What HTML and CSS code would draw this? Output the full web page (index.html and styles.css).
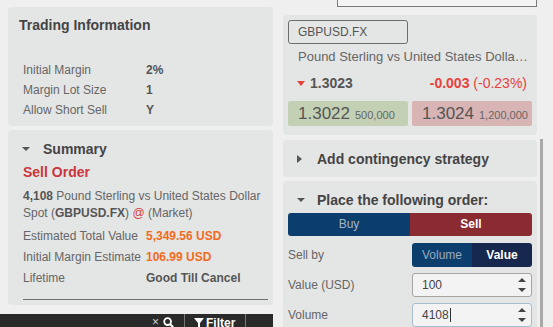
FILE: index.html
```html
<!DOCTYPE html>
<html>
<head>
	<title>Order Ticket</title>
	<link rel="stylesheet" href="styles.css">
</head>
<body>
	<div class="page">
		<div class="left">
			<div class="card info">
				<h2 class="info-title">Trading Information</h2>
				<div class="rows">
					<div class="row"><span class="label">Initial Margin</span><span class="value">2%</span></div>
					<div class="row"><span class="label">Margin Lot Size</span><span class="value">1</span></div>
					<div class="row"><span class="label">Allow Short Sell</span><span class="value">Y</span></div>
				</div>
			</div>
			<div class="card summary">
				<div class="section-head"><span class="caret-down"></span>Summary</div>
				<div class="sell-order">Sell Order</div>
				<p class="desc"><b>4,108</b> Pound Sterling vs United States Dollar Spot (<b>GBPUSD.FX</b>) <span class="at">@</span> (Market)</p>
				<div class="row wide"><span class="label">Estimated Total Value</span><span class="value orange">5,349.56 USD</span></div>
				<div class="row wide"><span class="label">Initial Margin Estimate</span><span class="value orange">106.99 USD</span></div>
				<div class="row wide"><span class="label">Lifetime</span><span class="value">Good Till Cancel</span></div>
				<div class="divider"></div>
			</div>
			<div class="toolbar">
				<span class="clear">×</span>
				<svg class="icon-search" width="11" height="11" viewBox="0 0 11 11">
					<circle cx="4.6" cy="4.6" r="3.4" fill="none" stroke="#fff" stroke-width="1.8"/>
					<line x1="7" y1="7" x2="10.2" y2="10.2" stroke="#fff" stroke-width="2"/>
				</svg>
				<span class="sep"></span>
				<svg class="icon-filter" width="10" height="11" viewBox="0 0 10 11">
					<path d="M0 0H10L6 5V11L4 10V5Z" fill="#fff"/>
				</svg>
				<span class="filter-text">Filter</span>
				<span class="sep"></span>
			</div>
		</div>
		<div class="right">
			<div class="search-box"></div>
			<div class="card quote">
				<div class="symbol">GBPUSD.FX</div>
				<div class="name">Pound Sterling vs United States Dollar Spot</div>
				<div class="change">
					<span class="last"><span class="tri-red"></span>1.3023</span>
					<span class="delta"><b>-0.003</b> (-0.23%)</span>
				</div>
				<div class="prices">
					<div class="px bid"><span class="big">1.3022</span><span class="small">500,000</span></div>
					<div class="px ask"><span class="big">1.3024</span><span class="small">1,200,000</span></div>
				</div>
			</div>
			<div class="scroll">
				<div class="scroll-content">
					<div class="card collapsed"><span class="caret-right"></span>Add contingency strategy</div>
					<div class="card order">
						<div class="order-head"><span class="caret-down"></span>Place the following order:</div>
						<div class="side">
							<span class="buy">Buy</span>
							<span class="sell">Sell</span>
						</div>
						<div class="field">
							<span class="field-label">Sell by</span>
							<div class="toggle">
								<span class="opt">Volume</span>
								<span class="opt active">Value</span>
							</div>
						</div>
						<div class="field">
							<span class="field-label">Value (USD)</span>
							<div class="input">
								<span class="input-text">100</span>
								<span class="spin"><span class="up"></span><span class="down"></span></span>
							</div>
						</div>
						<div class="field">
							<span class="field-label">Volume</span>
							<div class="input focus">
								<span class="input-text">4108<span class="cursor"></span></span>
								<span class="spin"><span class="up"></span><span class="down"></span></span>
							</div>
						</div>
					</div>
				</div>
				<div class="scrollbar"></div>
			</div>
		</div>
	</div>
</body>
</html>
```

FILE: styles.css
```css
body {
	margin: 0;
	background-color: #efefef;
	font-family: "Liberation Sans", Arial, sans-serif;
	color: #555555;
	overflow: hidden;
}
.page {
	display: flex;
	height: 327px;
	overflow: hidden;
}
.left {
	width: 273px;
	display: flex;
	flex-direction: column;
}
.left > * {
	flex-shrink: 0;
}
.card {
	background-color: #e4e5e5;
	border-radius: 4px;
	box-sizing: border-box;
}
.info {
	margin: 7px 0 0 8px;
	height: 119px;
	padding: 10px 5px 0 11px;
}
.info-title {
	margin: 0;
	font-size: 14px;
	line-height: 16px;
	color: #444444;
}
.info .rows {
	margin-top: 27px;
	padding-left: 4px;
}
.row {
	display: flex;
	font-size: 12px;
	line-height: 20px;
}
.row.wide {
	line-height: 21px;
}
.label {
	width: 123px;
	flex-shrink: 0;
	color: #666666;
}
.value {
	font-weight: bold;
	color: #555555;
}
.value.orange {
	color: #f26b1d;
}
.summary {
	margin: 4px 0 0 8px;
	height: 175px;
	padding: 10px 5px 0 15px;
}
.section-head {
	display: flex;
	align-items: center;
	font-size: 14px;
	font-weight: bold;
	line-height: 18px;
	color: #444444;
}
.caret-down {
	width: 0;
	height: 0;
	border-left: 4px solid transparent;
	border-right: 4px solid transparent;
	border-top: 4px solid #555555;
}
.section-head .caret-down {
	margin: 0 13px 0 -1px;
}
.sell-order {
	margin-top: 5px;
	font-size: 14px;
	font-weight: bold;
	line-height: 18px;
	color: #c9373d;
}
.desc {
	margin: 7px 0 4px;
	font-size: 12px;
	line-height: 17px;
	color: #666666;
}
.desc b {
	color: #555555;
}
.at {
	color: #d43d3d;
}
.divider {
	margin-top: 10px;
	border-top: 1px solid #707070;
}
.toolbar {
	margin-top: 9px;
	height: 30px;
	display: flex;
	align-items: flex-start;
	background-color: #2a2a2a;
	color: #ffffff;
	line-height: 16px;
}
.clear {
	margin-left: 152px;
	font-size: 12px;
	color: #d0d0d0;
}
.icon-search {
	margin: 3px 0 0 4px;
}
.sep {
	width: 1px;
	height: 16px;
	background-color: #777777;
	margin-left: 10px;
}
.icon-filter {
	margin: 4px 0 0 9px;
}
.filter-text {
	margin-left: 2px;
	font-size: 12px;
	font-weight: bold;
	padding-top: 1px;
}
.right {
	margin-left: 10px;
	width: 260px;
	display: flex;
	flex-direction: column;
}
.right > * {
	flex-shrink: 0;
}
.search-box {
	margin-left: 54px;
	width: 198px;
	height: 6px;
	border: 1px solid #7a7a7a;
	border-top: none;
	background-color: #f4f4f4;
}
.quote {
	margin-top: 8px;
	width: 254px;
	height: 120px;
	padding: 5px 5px 0 5px;
}
.symbol {
	width: 120px;
	height: 24px;
	box-sizing: border-box;
	border: 1px solid #6d6d6d;
	border-radius: 3px;
	padding-left: 9px;
	font-size: 12px;
	line-height: 22px;
	color: #555555;
}
.name {
	margin-top: 4px;
	padding: 0 4px 0 10px;
	font-size: 13px;
	line-height: 18px;
	color: #666666;
	white-space: nowrap;
	overflow: hidden;
	text-overflow: ellipsis;
}
.change {
	display: flex;
	justify-content: space-between;
	align-items: center;
	margin-top: 8px;
	padding: 0 5px 0 9px;
	line-height: 18px;
	font-size: 14px;
}
.last {
	display: flex;
	align-items: center;
	font-weight: bold;
	color: #555555;
}
.tri-red {
	width: 0;
	height: 0;
	border-left: 4px solid transparent;
	border-right: 4px solid transparent;
	border-top: 5px solid #e8413c;
	margin-right: 5px;
}
.delta {
	color: #e8413c;
}
.prices {
	display: flex;
	gap: 4px;
	margin-top: 9px;
}
.px {
	width: 120px;
	height: 25px;
	box-sizing: border-box;
	padding-left: 10px;
	display: flex;
	align-items: baseline;
	line-height: 25px;
	border-radius: 2px;
}
.bid {
	background-color: #c3d0b4;
}
.ask {
	background-color: #d9b4b4;
}
.big {
	font-size: 17px;
	color: #555555;
}
.small {
	margin-left: 5px;
	font-size: 11px;
	color: #666666;
}
.scroll {
	display: flex;
	margin-top: 4px;
	height: 188px;
}
.scroll-content {
	width: 254px;
}
.scrollbar {
	width: 3px;
	margin-left: 3px;
	background-color: #a9a9a9;
}
.collapsed {
	margin-top: 1px;
	height: 37px;
	display: flex;
	align-items: center;
	padding-left: 14px;
	font-size: 14px;
	font-weight: bold;
	color: #444444;
}
.caret-right {
	width: 0;
	height: 0;
	border-top: 4px solid transparent;
	border-bottom: 4px solid transparent;
	border-left: 5px solid #555555;
	margin-right: 15px;
}
.order {
	margin-top: 4px;
	height: 200px;
	padding: 10px 5px 0 5px;
}
.order-head {
	display: flex;
	align-items: center;
	padding-left: 9px;
	font-size: 14px;
	font-weight: bold;
	line-height: 18px;
	color: #444444;
}
.order-head .caret-down {
	margin-right: 12px;
}
.side {
	display: flex;
	margin-top: 4px;
	height: 23px;
	border-radius: 3px;
	overflow: hidden;
	font-size: 12px;
	line-height: 23px;
	text-align: center;
}
.buy {
	flex: 1;
	background-color: #0c3e6d;
	color: #a7b4c4;
}
.sell {
	flex: 1;
	background-color: #8a2a31;
	color: #ffffff;
	font-weight: bold;
}
.field {
	display: flex;
	align-items: center;
	margin-top: 6px;
}
.side + .field {
	margin-top: 7px;
}
.field-label {
	width: 124px;
	font-size: 12px;
	color: #666666;
}
.toggle {
	display: flex;
	width: 120px;
	height: 24px;
	border-radius: 3px;
	overflow: hidden;
	font-size: 12px;
	line-height: 24px;
	text-align: center;
}
.opt {
	flex: 1;
	background-color: #0c3e6d;
	color: #9aabbf;
}
.opt.active {
	background-color: #16284e;
	color: #ffffff;
	font-weight: bold;
}
.input {
	display: flex;
	width: 120px;
	height: 24px;
	box-sizing: border-box;
	border: 1px solid #a5a5a5;
	border-radius: 3px;
	background-color: #f3f3f3;
	padding-left: 9px;
	font-size: 12px;
	line-height: 22px;
	color: #444444;
}
.input.focus {
	border-color: #a9bcd0;
}
.input-text {
	flex: 1;
	display: flex;
	align-items: center;
}
.cursor {
	width: 1px;
	height: 14px;
	background-color: #333333;
	margin-left: 1px;
}
.spin {
	display: flex;
	flex-direction: column;
	justify-content: space-between;
	padding: 4px 5px 4px 0;
}
.up {
	width: 0;
	height: 0;
	border-left: 4px solid transparent;
	border-right: 4px solid transparent;
	border-bottom: 4px solid #444444;
}
.down {
	width: 0;
	height: 0;
	border-left: 4px solid transparent;
	border-right: 4px solid transparent;
	border-top: 4px solid #444444;
}
```
